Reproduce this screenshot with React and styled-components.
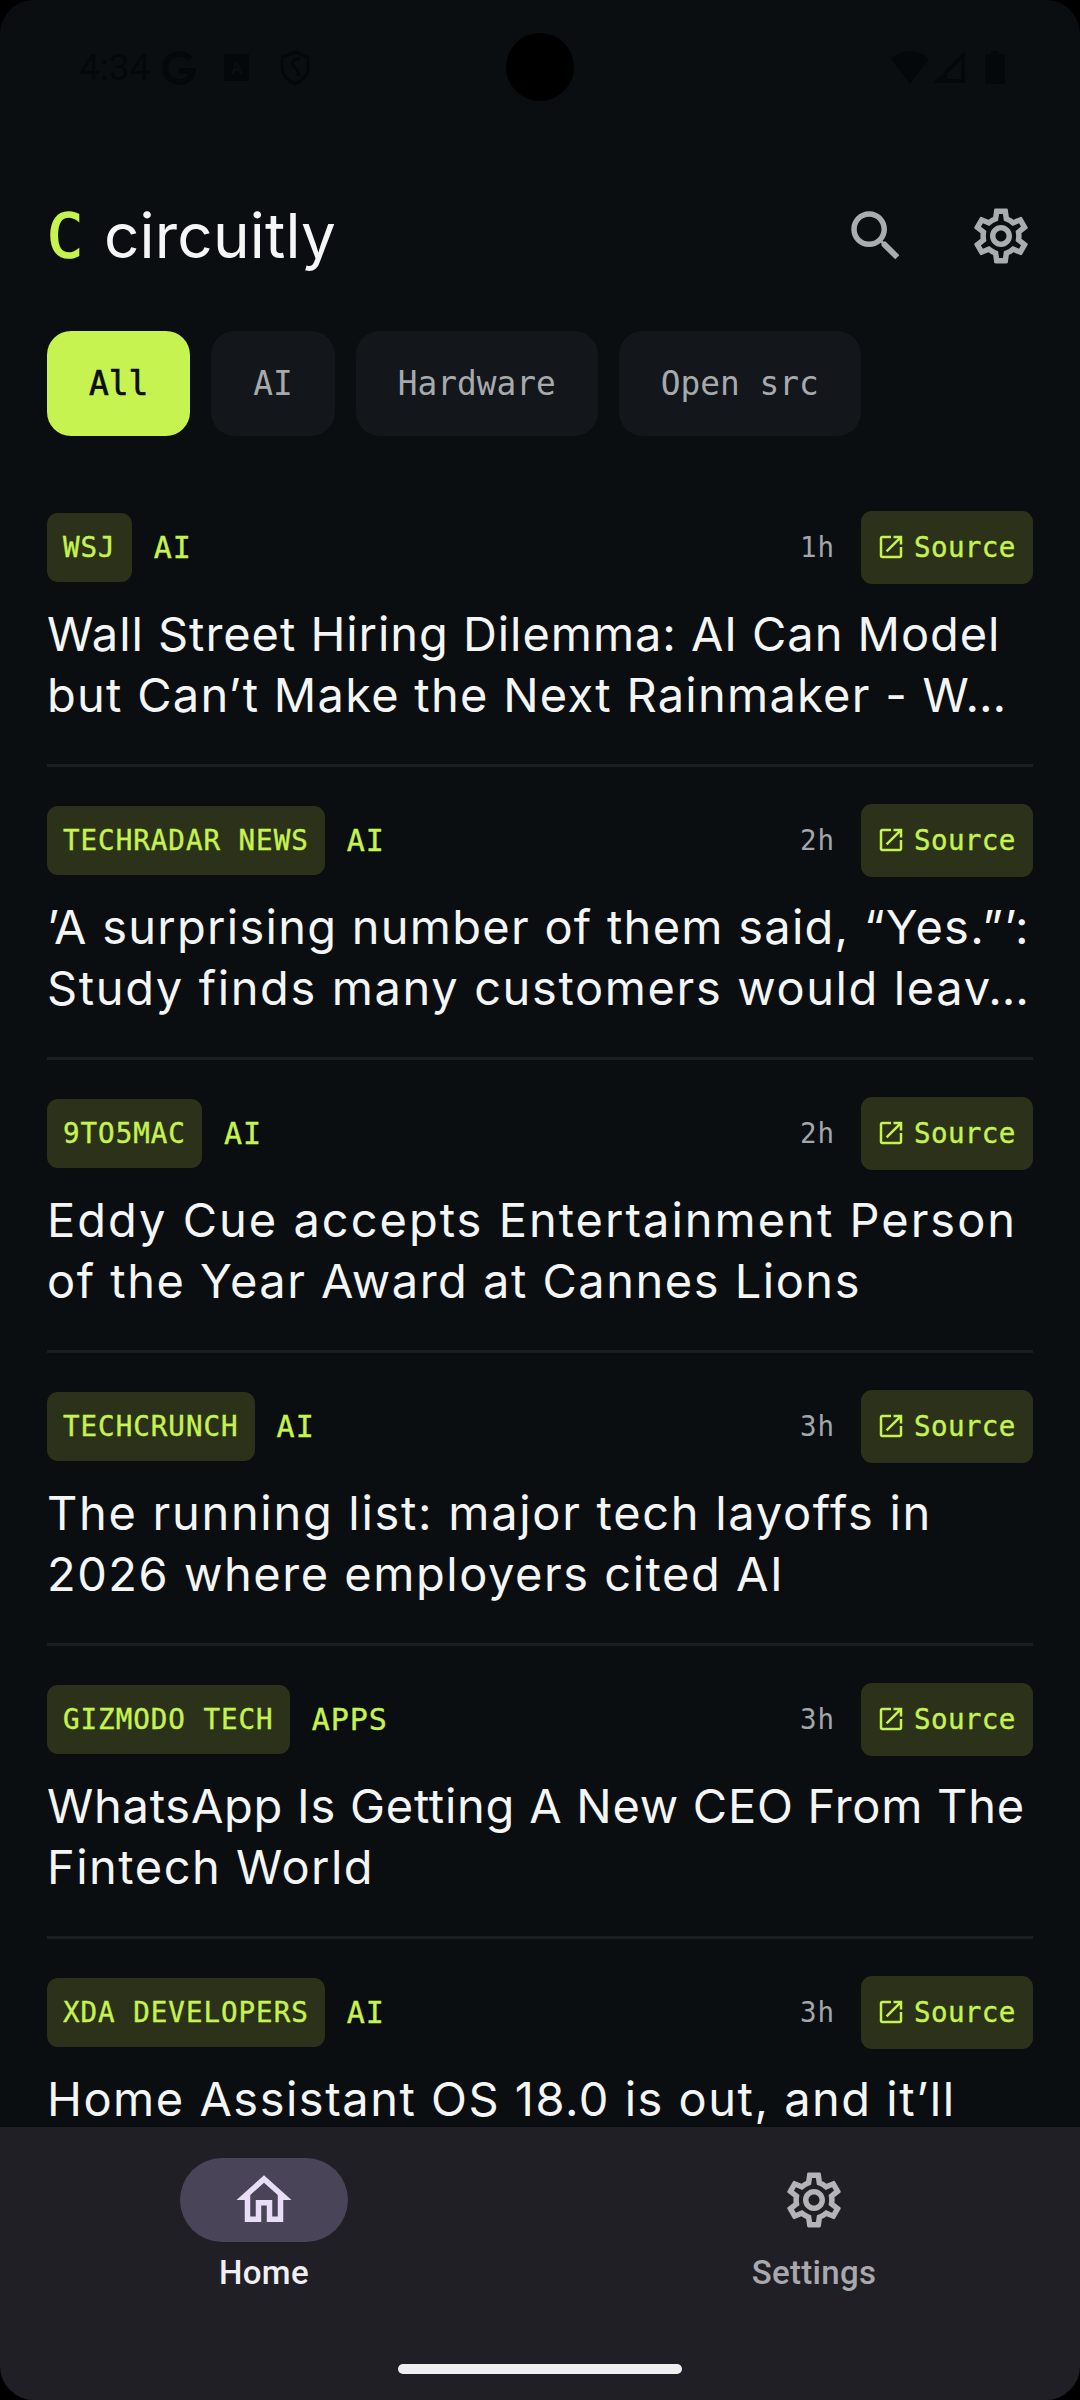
import React from "react";
import styled, { createGlobalStyle } from "styled-components";

const LIME = "#c6f34f";
const MONO = '"DejaVu Sans Mono", "Liberation Mono", monospace';
const SANS = 'Inter, "Noto Sans", sans-serif';

const Global = createGlobalStyle`
  html, body { margin: 0; padding: 0; background: #000; }
  * { box-sizing: border-box; }
`;

const Screen = styled.div`
  position: relative;
  width: 1080px;
  height: 2400px;
  background: #0a0e11;
  border-radius: 34px;
  overflow: hidden;
  display: flex;
  flex-direction: column;
`;

const StatusBar = styled.div`
  height: 135px;
  flex: none;
  padding: 0 75px 0 79px;
  display: flex;
  align-items: center;
  justify-content: space-between;
  color: #05080a;
`;
const StatusGroup = styled.div`
  display: flex;
  align-items: center;
  gap: ${(p) => p.$gap}px;
`;
const StatusSlot = styled.span`
  display: flex;
  margin-left: ${(p) => p.$left}px;
`;
const Clock = styled.span`
  font: 400 37px Roboto, sans-serif;
  line-height: 40px;
`;
const Camera = styled.div`
  position: absolute;
  left: 506px;
  top: 33px;
  width: 68px;
  height: 68px;
  border-radius: 50%;
  background: #000;
`;

const Header = styled.header`
  flex: none;
  height: 130px;
  margin-top: 36px;
  padding: 0 46px 0 47px;
  display: flex;
  align-items: center;
`;
const LogoMark = styled.span`
  font: 400 60px/1 ${MONO};
  -webkit-text-stroke: 1.6px ${LIME};
  color: ${LIME};
  width: 57px;
`;
const LogoText = styled.span`
  font: 400 62px/1 ${SANS};
  color: #f5f6f6;
  letter-spacing: 0.2px;
  flex: 1;
`;
const HeaderIcons = styled.div`
  display: flex;
  align-items: center;
  gap: 59px;
`;
const Glyph = styled.svg`
  display: block;
  flex: none;
  fill: ${(p) => p.$color};
`;

const Chips = styled.nav`
  flex: none;
  margin-top: 30px;
  padding: 0 47px;
  display: flex;
  gap: 21px;
`;
const Chip = styled.span`
  height: 105px;
  padding: 0 42px;
  border-radius: 24px;
  display: flex;
  align-items: center;
  font: 400 32.8px ${MONO};
  -webkit-text-stroke: ${(p) => (p.$active ? "0.7px #0a0e11" : "0")};
  background: ${(p) => (p.$active ? LIME : "#13171b")};
  color: ${(p) => (p.$active ? "#0a0e11" : "#a6aaad")};
`;

const List = styled.main`
  flex: 1;
  min-height: 0;
  margin-top: 38px;
  padding: 0 47px;
  overflow: hidden;
`;
const Row = styled.article`
  padding: 37px 0 39px;
  border-bottom: 3px solid #1a1e22;
  &:last-child { border-bottom: 0; }
`;
const Meta = styled.div`
  height: 73px;
  display: flex;
  align-items: center;
`;
const Tag = styled.span`
  height: 69px;
  padding: 0 16px 1px;
  border-radius: 11px;
  display: flex;
  align-items: center;
  background: #2b3219;
  color: ${LIME};
  font: 400 27.5px ${MONO};
  letter-spacing: 1px;
  -webkit-text-stroke: 0.4px ${LIME};
`;
const Category = styled.span`
  margin-left: 22px;
  flex: 1;
  color: ${LIME};
  font: 400 30px ${MONO};
  letter-spacing: 1px;
  -webkit-text-stroke: 0.4px ${LIME};
`;
const Time = styled.span`
  margin-right: 26px;
  padding-bottom: 2px;
  color: #a3a7aa;
  font: 400 27.5px ${MONO};
  letter-spacing: 1px;
`;
const Source = styled.span`
  width: 172px;
  height: 73px;
  padding: 0 0 1px 15px;
  border-radius: 11px;
  display: flex;
  align-items: center;
  gap: 8px;
  background: #2b3219;
  color: ${LIME};
  font: 400 27.5px ${MONO};
  letter-spacing: 0.4px;
  -webkit-text-stroke: 0.4px ${LIME};
`;
const Title = styled.h2`
  margin: 19px 0 0;
  font: 400 47px/61px ${SANS};
  color: #f4f5f5;
`;
const TitleLine = styled.div`
  white-space: nowrap;
  letter-spacing: ${(p) => p.$track}px;
`;

const BottomNav = styled.footer`
  flex: none;
  height: 273px;
  padding: 31px 0 26px;
  background: #1f1f25;
  display: flex;
  flex-direction: column;
  align-items: center;
`;
const NavItems = styled.div`
  display: flex;
  justify-content: center;
  gap: 382px;
  padding-right: 2px;
`;
const NavItem = styled.div`
  width: 168px;
  display: flex;
  flex-direction: column;
  align-items: center;
`;
const NavPill = styled.div`
  width: 168px;
  height: 84px;
  border-radius: 42px;
  display: flex;
  align-items: center;
  justify-content: center;
  background: ${(p) => (p.$active ? "#4a4458" : "transparent")};
`;
const NavLabel = styled.span`
  margin-top: 9px;
  white-space: nowrap;
  font: 500 33px/44px Roboto, sans-serif;
  letter-spacing: 0.3px;
  color: ${(p) => (p.$active ? "#f1eff4" : "#a9a8ad")};
`;
const Handle = styled.div`
  margin-top: auto;
  width: 284px;
  height: 10px;
  border-radius: 5px;
  background: #efefef;
`;

const GEAR =
  "M19.43 12.98c.04-.32.07-.64.07-.98 0-.34-.03-.66-.07-.98l2.11-1.65c.19-.15.24-.42.12-.64l-2-3.46c-.09-.16-.26-.25-.44-.25-.06 0-.12.01-.17.03l-2.49 1c-.52-.4-1.08-.73-1.69-.98l-.38-2.65C14.46 2.18 14.25 2 14 2h-4c-.25 0-.46.18-.49.42l-.38 2.65c-.61.25-1.17.59-1.69.98l-2.49-1c-.06-.02-.12-.03-.18-.03-.17 0-.34.09-.43.25l-2 3.46c-.13.22-.07.49.12.64l2.11 1.65c-.04.32-.07.65-.07.98 0 .33.03.66.07.98l-2.11 1.65c-.19.15-.24.42-.12.64l2 3.46c.09.16.26.25.44.25.06 0 .12-.01.17-.03l2.49-1c.52.4 1.08.73 1.69.98l.38 2.65c.03.24.24.42.49.42h4c.25 0 .46-.18.49-.42l.38-2.65c.61-.25 1.17-.59 1.69-.98l2.49 1c.06.02.12.03.18.03.17 0 .34-.09.43-.25l2-3.46c.12-.22.07-.49-.12-.64l-2.11-1.65zm-1.98-1.71c.04.31.05.52.05.73 0 .21-.02.43-.05.73l-.14 1.13.89.7 1.08.84-.7 1.21-1.27-.51-1.04-.42-.9.68c-.43.32-.84.56-1.25.73l-1.06.43-.16 1.13-.2 1.35h-1.4l-.19-1.35-.16-1.13-1.06-.43c-.43-.18-.83-.41-1.23-.71l-.91-.7-1.06.43-1.27.51-.7-1.21 1.08-.84.89-.7-.14-1.13c-.03-.31-.05-.54-.05-.74s.02-.43.05-.73l.14-1.13-.89-.7-1.08-.84.7-1.21 1.27.51 1.04.42.9-.68c.43-.32.84-.56 1.25-.73l1.06-.43.16-1.13.2-1.35h1.39l.19 1.35.16 1.13 1.06.43c.43.18.83.41 1.23.71l.91.7 1.06-.43 1.27-.51.7 1.21-1.07.85-.89.7.14 1.13zM12 8c-2.21 0-4 1.79-4 4s1.79 4 4 4 4-1.79 4-4-1.79-4-4-4zm0 6c-1.1 0-2-.9-2-2s.9-2 2-2 2 .9 2 2-.9 2-2 2z";
const SEARCH =
  "M15.5 14h-.79l-.28-.27C15.41 12.59 16 11.11 16 9.5 16 5.91 13.09 3 9.5 3S3 5.91 3 9.5 5.91 16 9.5 16c1.61 0 3.09-.59 4.23-1.57l.27.28v.79l5 4.99L20.49 19l-4.99-5zm-6 0C7.01 14 5 11.99 5 9.5S7.01 5 9.5 5 14 7.01 14 9.5 11.99 14 9.5 14z";
const HOME = "M12 5.69l5 4.5V18h-2v-6H9v6H7v-7.81l5-4.5M12 3L2 12h3v8h6v-6h2v6h6v-8h3L12 3z";
const OPEN =
  "M19 19H5V5h7V3H5c-1.11 0-2 .9-2 2v14c0 1.1.89 2 2 2h14c1.1 0 2-.9 2-2v-7h-2v7zM14 3v2h3.59l-9.83 9.83 1.41 1.41L19 6.41V10h2V3h-7z";

const Icon = ({ d, size, color }) => (
  <Glyph viewBox="0 0 24 24" width={size} height={size} $color={color}>
    <path d={d} />
  </Glyph>
);

const StatusLeft = () => (
  <StatusGroup $gap={12}>
    <Clock>4:34</Clock>
    <svg width="34" height="34" viewBox="0 0 34 34" fill="none" stroke="currentColor" strokeWidth="6">
      <path d="M28 8a14 14 0 1 0 3 12H17" />
    </svg>
    <StatusSlot $left={16}>
      <svg width="26" height="28" viewBox="0 0 26 28">
        <path fill="currentColor" fillRule="evenodd" d="M0 0h25v27H0zM12.5 6 7 20h3l1-3h3.500l1 3h3zM12.500 10l1.200 4.500h-2.400z" />
      </svg>
    </StatusSlot>
    <StatusSlot $left={18}>
      <svg width="30" height="36" viewBox="0 0 30 36" fill="none" stroke="currentColor" strokeWidth="3">
        <path d="M15 2 28 7v11c0 7-6 13-13 16C8 31 2 25 2 18V7z" />
        <path d="M20 9c-5-1-9 2-7 6s7 5 5 11" />
      </svg>
    </StatusSlot>
  </StatusGroup>
);

const StatusRight = () => (
  <StatusGroup $gap={4}>
    <svg width="38" height="33" viewBox="0 0 38 33">
      <path fill="currentColor" d="M0 8C5 3 12 0 19 0s14 3 19 8L19 33z" />
    </svg>
    <svg width="33" height="33" viewBox="0 0 33 33">
      <path fill="currentColor" fillRule="evenodd" d="M32 0v32H0zM28 9 14 23v5h14z" />
    </svg>
    <StatusSlot $left={15}>
      <svg width="20" height="33" viewBox="0 0 20 33">
        <path fill="currentColor" d="M6 0h8v3h4q2 0 2 2v26q0 2-2 2H2q-2 0-2-2V5q0-2 2-2h4z" />
      </svg>
    </StatusSlot>
  </StatusGroup>
);

const CHIPS = ["All", "AI", "Hardware", "Open src"];

const STORIES = [
  { source: "WSJ", cat: "AI", time: "1h", lines: [["Wall Street Hiring Dilemma: AI Can Model", 0.94], ["but Can’t Make the Next Rainmaker - W…", 1.26]] },
  { source: "TECHRADAR NEWS", cat: "AI", time: "2h", lines: [["’A surprising number of them said, “Yes.”’:", 1.26], ["Study finds many customers would leav…", 1.62]] },
  { source: "9TO5MAC", cat: "AI", time: "2h", lines: [["Eddy Cue accepts Entertainment Person", 2.0], ["of the Year Award at Cannes Lions", 1.5]] },
  { source: "TECHCRUNCH", cat: "AI", time: "3h", lines: [["The running list: major tech layoffs in", 1.7], ["2026 where employers cited AI", 1.53]] },
  { source: "GIZMODO TECH", cat: "APPS", time: "3h", lines: [["WhatsApp Is Getting A New CEO From The", 0.74], ["Fintech World", 1.49]] },
  { source: "XDA DEVELOPERS", cat: "AI", time: "3h", lines: [["Home Assistant OS 18.0 is out, and it’ll", 1.5]] },
];

export default function App() {
  return (
    <>
      <Global />
      <Screen>
        <StatusBar>
          <StatusLeft />
          <StatusRight />
        </StatusBar>
        <Camera />
        <Header>
          <LogoMark>C</LogoMark>
          <LogoText>circuitly</LogoText>
          <HeaderIcons>
            <Icon d={SEARCH} size={66} color="#a9adaf" />
            <Icon d={GEAR} size={66} color="#a9adaf" />
          </HeaderIcons>
        </Header>
        <Chips>
          {CHIPS.map((c, i) => (
            <Chip key={c} $active={i === 0}>{c}</Chip>
          ))}
        </Chips>
        <List>
          {STORIES.map((s) => (
            <Row key={s.source}>
              <Meta>
                <Tag>{s.source}</Tag>
                <Category>{s.cat}</Category>
                <Time>{s.time}</Time>
                <Source>
                  <Icon d={OPEN} size={30} color={LIME} />
                  Source
                </Source>
              </Meta>
              <Title>
                {s.lines.map(([text, track]) => (
                  <TitleLine key={text} $track={track}>{text}</TitleLine>
                ))}
              </Title>
            </Row>
          ))}
        </List>
        <BottomNav>
          <NavItems>
            <NavItem>
              <NavPill $active>
                <Icon d={HOME} size={66} color="#e8def8" />
              </NavPill>
              <NavLabel $active>Home</NavLabel>
            </NavItem>
            <NavItem>
              <NavPill>
                <Icon d={GEAR} size={66} color="#b4b3b8" />
              </NavPill>
              <NavLabel>Settings</NavLabel>
            </NavItem>
          </NavItems>
          <Handle />
        </BottomNav>
      </Screen>
    </>
  );
}
